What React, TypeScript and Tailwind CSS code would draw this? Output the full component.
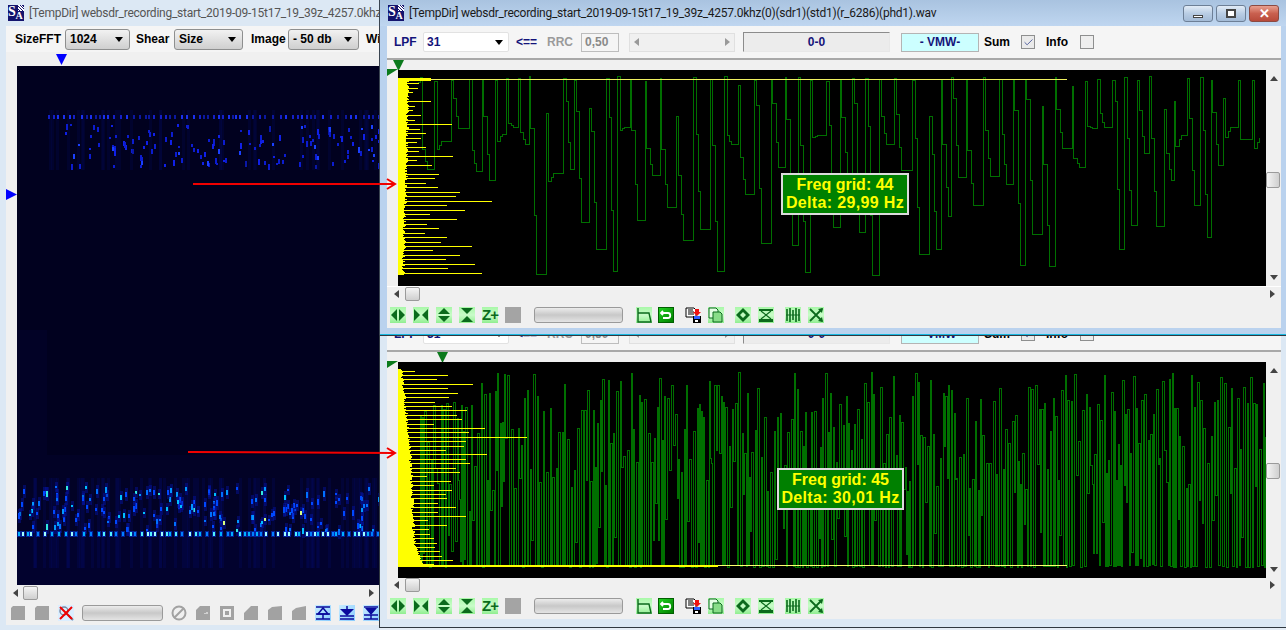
import type { ReactNode } from "react";
import { Check } from "lucide-react";

const TITLE_LEFT = "[TempDir] websdr_recording_start_2019-09-15t17_19_39z_4257.0khz";
const TITLE_RIGHT = `${TITLE_LEFT}(0)(sdr1)(std1)(r_6286)(phd1).wav`;

function rng(seed: number) {
  let s = seed;
  return () => {
    s = (s * 1664525 + 1013904223) % 4294967296;
    return s / 4294967296;
  };
}

// bars read off the reference: [y, x end]
const TOP_BARS = [
  [68, 118], [85, 115], [97, 100], [124, 153], [137, 105], [150, 100], [166, 123], [179, 105], [193, 215], [206, 120],
  [220, 137], [233, 122], [247, 110], [261, 137], [274, 117], [288, 218], [301, 110], [315, 155], [343, 176], [355, 165],
  [370, 138], [382, 173], [397, 239], [409, 227], [424, 335], [436, 200], [451, 254], [463, 150], [478, 230], [491, 140],
  [505, 176], [518, 135], [532, 200], [545, 183], [559, 275], [571, 158], [586, 239], [598, 197], [613, 284], [625, 203], [640, 305],
].map(([y, x]) => [60 + y / 3, 380 + x / 3]);

const LOW_BARS = [
  [49, 90], [61, 189], [73, 155], [88, 264], [100, 189], [115, 219], [127, 192], [140, 150], [154, 201], [166, 246],
  [181, 216], [193, 231], [208, 147], [220, 300], [232, 252], [247, 426], [259, 243], [274, 237], [286, 183], [298, 306],
  [313, 243], [325, 255], [340, 213], [352, 225], [364, 126], [379, 198], [391, 147], [406, 201], [418, 183], [430, 186],
  [445, 159], [457, 213], [472, 159], [484, 243], [496, 129], [511, 186], [523, 132], [538, 135], [550, 147], [565, 156],
  [577, 150], [589, 165], [604, 171], [616, 204], [628, 147],
].map(([y, x]) => [355 + y / 3, 385 + x / 3]);

function bandPath(y0: number, y1: number, edge: (y: number) => number, seed: number) {
  const r = rng(seed);
  let d = "";
  for (let y = y0; y < y1; y++) {
    const w = edge(y) + r() * 3 - 398;
    d += `M398 ${y}h${w.toFixed(0)}v1h-${w.toFixed(0)}z`;
  }
  return d;
}

function topTrace() {
  const r = rng(44);
  let d = "M418 82";
  let x = 420;
  while (x < 1266) {
    const top = r() < 0.7 ? 76 + r() * 5 : 85 + r() * 40;
    const mid = top + 15 + r() * 60;
    const low = 125 + r() * 150;
    const a = Math.round(x);
    d += `H${a}V${top.toFixed(0)}H${a + 1 + Math.round(r() * 2)}V${mid.toFixed(0)}H${a + 5}V${(mid + (low - mid) * 0.6).toFixed(0)}H${a + 7}V${low.toFixed(0)}`;
    x += 10 + r() * 8;
  }
  return d;
}

function lowTrace() {
  const r = rng(45);
  let d = "M420 565";
  let x = 420;
  while (x < 1266) {
    const lim = x < 480 ? 395 : 372;
    const hi = lim + Math.pow(r(), 1.3) * 120;
    const lo = r() < 0.6 ? 565 + r() * 2 : hi + 50 + r() * 100;
    const w = 1 + Math.round(r());
    const w2 = 1 + Math.round(r());
    d += `H${x}V${hi.toFixed(0)}H${x + w}V${Math.min(lo, 567).toFixed(0)}H${x + w + w2}`;
    x += w + w2;
  }
  return d;
}

type Spot = { x: number; y: number; h: number; c: string };

function cloud(seed: number, n: number, x0: number, y0: number, y1: number, colors: string[]): Spot[] {
  const r = rng(seed);
  return Array.from({ length: n }, () => ({
    x: x0 + Math.round(r() * (379 - x0)),
    y: y0 + Math.round(r() * (y1 - y0)),
    h: 2 + Math.round(r() * 4),
    c: colors[Math.floor(r() * r() * colors.length)],
  }));
}

function comb(seed: number, x0: number, y: number, colors: string[]): Spot[] {
  const r = rng(seed);
  const out: Spot[] = [];
  for (let x = x0; x < 380; x += 3 + Math.round(r() * 5)) {
    out.push({ x, y, h: 4, c: colors[Math.floor(r() * colors.length)] });
  }
  return out;
}

const DIM = ["#0c1cd0", "#1020e8", "#1a40ff", "#0a18a8"];
const BRIGHT = ["#0048ff", "#0070ff", "#0098ff", "#00c0ff", "#30e8e0", "#d8ff80"];

const TOP_CLOUD = cloud(11, 140, 47, 124, 165, DIM);
const TOP_COMB = comb(12, 48, 115, ["#1420c8", "#1a30f0", "#0c18a0"]);
const LOW_CLOUD = cloud(21, 170, 18, 486, 530, BRIGHT);
const LOW_COMB = comb(22, 18, 532, ["#00b0ff", "#50f0ff", "#0080ff", "#a0ffff"]);

function Spectrogram() {
  const streaks = rng(31);
  const xs = Array.from({ length: 70 }, () => 18 + Math.round(streaks() * 360));
  return (
    <svg viewBox="17 66 363 519" width={363} height={519} className="block shrink-0" shapeRendering="crispEdges">
      <rect x={17} y={66} width={363} height={519} fill="#01011f" />
      <rect x={17} y={330} width={30} height={255} fill="#020226" />
      <rect x={17} y={455} width={363} height={130} fill="#020226" />
      <rect x={17} y={535} width={363} height={50} fill="#02022e" />
      {xs.slice(0, 40).map((x, i) =>
        x > 47 ? <rect key={i} x={x} y={110} width={3} height={60} fill="#03084a" opacity={0.35} /> : null,
      )}
      {xs.map((x, i) => (
        <rect key={i} x={x} y={478} width={3} height={90} fill="#040a60" opacity={0.3} />
      ))}
      {TOP_CLOUD.map((s, i) => (
        <rect key={i} x={s.x} y={s.y} width={2} height={s.h} fill={s.c} />
      ))}
      {TOP_COMB.map((s, i) => (
        <rect key={i} x={s.x} y={s.y} width={2} height={s.h} fill={s.c} />
      ))}
      {LOW_CLOUD.map((s, i) => (
        <g key={i}>
          <rect x={s.x} y={s.y - 4} width={3} height={s.h + 8} fill="#0414a8" opacity={0.45} />
          <rect x={s.x} y={s.y} width={2} height={s.h} fill={s.c} />
        </g>
      ))}
      {LOW_COMB.map((s, i) => (
        <g key={i}>
          <rect x={s.x - 1} y={s.y - 1} width={4} height={6} fill="#0430d0" opacity={0.6} />
          <rect x={s.x} y={s.y} width={2} height={s.h} fill={s.c} />
        </g>
      ))}
    </svg>
  );
}

function Plot({ low }: { low?: boolean }) {
  const bars = low ? LOW_BARS : TOP_BARS;
  const y0 = low ? 362 : 70;
  const edge = low
    ? (y: number) => (y < 450 ? 400 + (y - 369) * 0.11 : y < 545 ? 409 + (y - 450) * 0.04 : 413 + (y - 545) * 0.45)
    : (y: number) => (y < 90 ? 407 : 407 - (y - 90) * 0.028);
  return (
    <svg viewBox={`398 ${y0} 868 216`} width={868} height={216} className="block shrink-0 bg-black" shapeRendering="crispEdges">
      <path d={low ? lowTrace() : topTrace()} fill="none" stroke="#006f00" strokeWidth={1} />
      <path d={low ? bandPath(369, 566, edge, 3) : bandPath(78, 275, edge, 4)} fill="#ffff00" />
      {bars.map(([y, x], i) => (
        <rect key={i} x={398} y={Math.round(y)} width={x - 398} height={1} fill="#ffff00" />
      ))}
      {low ? (
        <>
          <rect x={398} y={565} width={320} height={2} fill="#ffff00" />
          <rect x={718} y={565} width={349} height={1} fill="#ffff70" />
        </>
      ) : (
        <>
          <rect x={398} y={78} width={33} height={3} fill="#ffff00" />
          <rect x={431} y={79} width={636} height={1} fill="#f0f060" />
        </>
      )}
    </svg>
  );
}

function Arrow({ dir, className = "" }: { dir: "up" | "down" | "left" | "right"; className?: string }) {
  const pts = { up: "0,5 8,5 4,0", down: "0,0 8,0 4,5", left: "5,0 5,8 0,4", right: "0,0 0,8 5,4" }[dir];
  const wide = dir === "up" || dir === "down";
  return (
    <svg width={wide ? 8 : 5} height={wide ? 5 : 8} viewBox={wide ? "0 0 8 5" : "0 0 5 8"} className={`shrink-0 ${className}`}>
      <polygon points={pts} fill="#444" />
    </svg>
  );
}

function Logo() {
  return (
    <span className="relative flex h-4 w-4 shrink-0 items-end overflow-hidden bg-[#14146e] font-['Liberation_Serif',serif] text-[14px] font-bold leading-[14px] text-white">
      <span className="mb-[2px]">S</span>
      <span className="text-[10px] leading-[10px]">A</span>
      <span className="absolute right-0 top-0 h-[6px] w-[6px] bg-[repeating-linear-gradient(45deg,#fff_0,#fff_1px,#14146e_1px,#14146e_2px)]" />
    </span>
  );
}

function WinButton({ kind }: { kind: "min" | "max" | "close" }) {
  const tone =
    kind === "close"
      ? "from-[#e8a090] via-[#c9604f] to-[#b84a3a] border-[#8c4a42]"
      : "from-[#e2ecf7] via-[#b9cde4] to-[#a3bbd7] border-[#6d7f96]";
  return (
    <span className={`flex h-[17px] w-[30px] items-center justify-center rounded-[3px] border bg-gradient-to-b ${tone}`}>
      {kind === "min" && <span className="mt-[6px] h-[3px] w-[10px] border border-[#444] bg-white" />}
      {kind === "max" && <span className="h-[9px] w-[10px] border-2 border-[#444] bg-white" />}
      {kind === "close" && <span className="font-['Liberation_Sans',sans-serif] text-[13px] font-bold leading-none text-white">✕</span>}
    </span>
  );
}

function TitleBar({ text, active }: { text: string; active?: boolean }) {
  return (
    <div
      className={`flex h-[26px] shrink-0 items-center gap-[5px] font-['Roboto',sans-serif] text-[12px] tracking-[-0.25px] whitespace-nowrap ${
        active ? "bg-gradient-to-b from-[#a9c3e0] to-[#bfd6f0] pl-2 pr-[7px] text-[#1a1a1a]" : "bg-[#dce8f4] pl-2 text-[#555]"
      }`}
    >
      <Logo />
      <span className="flex-1 overflow-hidden">{text}</span>
      {active && (
        <span className="mt-px flex gap-[3px]">
          <WinButton kind="min" />
          <WinButton kind="max" />
          <WinButton kind="close" />
        </span>
      )}
    </div>
  );
}

function Combo({ value, className }: { value: string; className: string }) {
  return (
    <span className={`flex h-[21px] shrink-0 items-center justify-between rounded-[3px] border border-[#8e8f8f] bg-gradient-to-b from-[#f2f2f2] to-[#cfcfcf] pl-1 pr-[6px] ${className}`}>
      {value}
      <Arrow dir="down" className="[&_polygon]:fill-black" />
    </span>
  );
}

function LeftToolbar() {
  return (
    <div className="flex h-[26px] shrink-0 items-center overflow-hidden whitespace-nowrap bg-[#f5f5f5] pl-[9px] text-[12px] font-bold text-black">
      <span className="w-[50px] shrink-0">SizeFFT</span>
      <Combo value="1024" className="w-[65px]" />
      <span className="ml-[6px] w-[38px] shrink-0">Shear</span>
      <Combo value="Size" className="w-[69px]" />
      <span className="ml-2 w-[37px] shrink-0">Image</span>
      <Combo value="- 50 db" className="w-[71px]" />
      <span className="ml-[7px] shrink-0">Width</span>
    </div>
  );
}

function RightToolbar() {
  return (
    <div className="flex h-[32px] shrink-0 items-center whitespace-nowrap bg-[#f5f5f5] pl-[7px] text-[12px] font-bold text-black">
      <span className="w-[29px] text-[#14147a]">LPF</span>
      <span className="flex h-[20px] w-[86px] items-center justify-between rounded-[2px] border border-[#e2e2e2] bg-white pl-[3px] pr-[5px] text-[#14147a]">
        31
        <Arrow dir="down" className="[&_polygon]:fill-black" />
      </span>
      <span className="ml-[7px] w-[31px] text-[#14147a]">&lt;==</span>
      <span className="w-[34px] text-[#9a9a9a]">RRC</span>
      <span className="flex h-[19px] w-[38px] items-center border border-[#bdbdbd] bg-[#f5f5f5] pl-[3px] text-[#8a8a8a]">0,50</span>
      <span className="ml-[10px] flex h-[19px] w-[106px] items-center justify-between border border-[#e0e0e0] bg-[#f0f0f0] px-1">
        <Arrow dir="left" className="[&_polygon]:fill-[#999]" />
        <Arrow dir="right" className="[&_polygon]:fill-[#999]" />
      </span>
      <span className="ml-2 flex h-[20px] w-[147px] items-center justify-center border border-t-[#8c8c8c] border-l-[#8c8c8c] border-b-[#e8e8e8] border-r-[#e8e8e8] bg-[#ececec] text-[#14147a]">0-0</span>
      <span className="ml-[11px] flex h-[19px] w-[78px] items-center justify-center border border-[#b4b4b4] bg-[#ccffff] text-[#14147a]">- VMW-</span>
      <span className="ml-[5px] w-[37px]">Sum</span>
      <span className="flex h-[14px] w-[14px] items-center justify-center border border-[#8e8f8f] bg-[#eaeaea]">
        <Check size={11} strokeWidth={2} color="#4a5a9a" />
      </span>
      <span className="ml-[11px] w-[34px]">Info</span>
      <span className="h-[14px] w-[14px] border border-[#8e8f8f] bg-[#eeeeee]" />
    </div>
  );
}

function ScrollH({ thumb, className = "" }: { thumb: string; className?: string }) {
  return (
    <div className={`flex h-[14px] shrink-0 items-center bg-[#f0f0f0] ${className}`}>
      <Arrow dir="left" className="ml-[7px]" />
      <span className={`h-[14px] w-[15px] rounded-[2px] border border-[#9a9a9a] bg-gradient-to-b from-[#f4f4f4] to-[#cfcfcf] ${thumb}`} />
      <Arrow dir="right" className="ml-auto mr-[6px]" />
    </div>
  );
}

function ScrollV({ thumb }: { thumb: string }) {
  return (
    <div className="relative flex w-[15px] shrink-0 flex-col items-center justify-between bg-[#f0f0f0] py-[6px]">
      <Arrow dir="up" />
      <span className={`absolute left-0 h-[16px] w-[14px] rounded-[2px] border border-[#9a9a9a] bg-gradient-to-r from-[#f4f4f4] to-[#cfcfcf] ${thumb}`} />
      <Arrow dir="down" />
    </div>
  );
}

function Slider({ w }: { w: string }) {
  return <span className={`h-[16px] ${w} rounded-[3px] border border-[#9a9a9a] bg-gradient-to-b from-[#ececec] via-[#c8c8c8] to-[#e4e4e4]`} />;
}

function Tile({ children, tone = "bg-gradient-to-b from-[#a8f8a8] via-[#c8fcc8] to-[#90ee90]", className = "" }: { children: ReactNode; tone?: string; className?: string }) {
  return <span className={`flex h-4 w-4 shrink-0 items-center justify-center ${tone} ${className}`}>{children}</span>;
}

function Draw({ children }: { children: ReactNode }) {
  return (
    <svg viewBox="0 0 16 16" width={16} height={16} className="block shrink-0">
      {children}
    </svg>
  );
}

const G = "#0b6a1c";
const B = "#0a0a9c";
const GR = "#a2a2a2";

function GreenToolbar() {
  return (
    <div className="flex h-[27px] shrink-0 items-center bg-[#f0f0f0] pl-[3px]">
      <span className="flex gap-[7px]">
        <Tile><Draw><polygon points="1,8 7,2 7,14" fill={G} /><polygon points="15,8 9,2 9,14" fill={G} /></Draw></Tile>
        <Tile><Draw><polygon points="1,2 7,8 1,14" fill={G} /><polygon points="15,2 9,8 15,14" fill={G} /></Draw></Tile>
        <Tile><Draw><polygon points="8,1 14,7 2,7" fill={G} /><polygon points="8,15 14,9 2,9" fill={G} /></Draw></Tile>
        <Tile><Draw><polygon points="2,1 14,1 8,7" fill={G} /><polygon points="2,15 14,15 8,9" fill={G} /></Draw></Tile>
        <Tile><span className="font-['Liberation_Sans',sans-serif] text-[15px] font-bold leading-none tracking-[-1px] text-[#0b6a1c]">Z+</span></Tile>
        <span className="h-4 w-4 bg-[#a4a4a4]" />
      </span>
      <span className="ml-[13px] flex"><Slider w="w-[89px]" /></span>
      <span className="ml-[13px] flex gap-[6px]">
        <Tile><Draw><path d="M2 1V15H15L13 6H2" fill="none" stroke={G} strokeWidth={1.4} /></Draw></Tile>
        <Tile tone="bg-gradient-to-br from-[#20d020] to-[#008000] border border-[#006000]">
          <Draw><path d="M5 4L3 6L5 8M3 6H10C13 6 13 11 10 11H5" fill="none" stroke="#fff" strokeWidth={1.8} /></Draw>
        </Tile>
      </span>
      <span className="ml-[11px] flex gap-[7px]">
        <Draw>
          <path d="M1 1H9L11 3V10H1Z" fill="#fff" stroke="#000" />
          <path d="M3 3H8M3 5H9M3 7H9" stroke="#000" />
          <path d="M10 2H14V5H16L12 9L8 5H10Z" fill="#ee1111" />
          <rect x={8} y={9} width={8} height={7} fill="#000" />
          <rect x={9} y={9} width={6} height={3} fill="#3060ff" />
          <rect x={10} y={13} width={3} height={2} fill="#fff" />
        </Draw>
        <Tile>
          <Draw>
            <path d="M1 1H8L10 3V11H1Z" fill="#e4ffe4" stroke={G} />
            <path d="M5 5H12L14 7V15H5Z" fill="#88dd88" stroke={G} />
          </Draw>
        </Tile>
      </span>
      <span className="ml-[11px] flex gap-[7px]">
        <Tile><Draw><polygon points="8,1 15,8 8,15 1,8" fill={G} /><polygon points="8,5 11,8 8,11 5,8" fill="#c0fac0" /></Draw></Tile>
        <Tile><Draw><path d="M1 2H15V4H1ZM1 12H15V15H1Z" fill={G} /><path d="M3 4L13 12M13 4L3 12" stroke={G} strokeWidth={1.2} /></Draw></Tile>
      </span>
      <span className="ml-[11px] flex gap-[7px]">
        <Tile><Draw><path d="M2 2V14M5 1V15M8 3V13M11 1V15M14 2V14" stroke={G} strokeWidth={1.6} /><path d="M1 8H15" stroke={G} /></Draw></Tile>
        <Tile><Draw><path d="M2 2L14 14M14 2L2 14" stroke={G} strokeWidth={1.8} /><polygon points="15,1 10,2 14,6" fill={G} /><polygon points="15,15 10,14 14,10" fill={G} /></Draw></Tile>
      </span>
    </div>
  );
}

const CUT = "M3 1H15V15H1V3Z";
const SLOPE = "M8 1H15V15H1V8Z";

function BlueTile({ children }: { children: ReactNode }) {
  return <Tile tone="bg-gradient-to-br from-[#c8ecff] to-[#88ccff]">{children}</Tile>;
}

function LeftIcons() {
  return (
    <div className="flex h-[25px] shrink-0 items-center gap-2 overflow-hidden bg-[#f0f0f0] pl-1">
      <Draw><path d={CUT} fill={GR} /></Draw>
      <Draw><path d={CUT} fill={GR} /></Draw>
      <Tile tone="bg-[#dbeeff]">
        <Draw>
          <circle cx={6} cy={6} r={4} fill="none" stroke="#7a8aa0" strokeWidth={1.5} />
          <path d="M10 10L15 15" stroke="#7a8aa0" strokeWidth={2} />
          <path d="M2 2L14 14M14 2L2 14" stroke="#ee0000" strokeWidth={2} />
        </Draw>
      </Tile>
      <Slider w="w-[81px] shrink-0" />
      <Draw><circle cx={8} cy={8} r={6.5} fill="none" stroke={GR} strokeWidth={2} /><path d="M3 13L13 3" stroke={GR} strokeWidth={2} /></Draw>
      <Draw><path d="M5 1H15V15H1V5Z" fill={GR} /><path d="M12 7V9M10 8V9" stroke="#fff" /></Draw>
      <Draw><path d="M1 1H15V15H1ZM4 4V12H12V4Z" fill={GR} fillRule="evenodd" /><rect x={6} y={6} width={4} height={4} fill={GR} /></Draw>
      <Draw><path d={SLOPE} fill={GR} /></Draw>
      <Draw><path d="M5 2L15 1V15H1V5Z" fill={GR} /></Draw>
      <Draw><path d="M5 3L15 1V15H1V6Z" fill={GR} /></Draw>
      <BlueTile><Draw><path d="M1 2H15M1 14H15M1 9H15" stroke={B} strokeWidth={1.5} /><path d="M8 3L3 9H13ZM8 9V14" fill="none" stroke={B} strokeWidth={1.5} /></Draw></BlueTile>
      <BlueTile><Draw><path d="M8 1V4M1 14H15" stroke={B} strokeWidth={1.5} /><polygon points="1,4 15,4 8,11" fill={B} /><path d="M1 11H15" stroke={B} strokeWidth={1.5} /></Draw></BlueTile>
      <BlueTile><Draw><path d="M1 2H15M1 14H15M1 10H15" stroke={B} strokeWidth={1.5} /><polygon points="2,3 14,3 8,10" fill={B} /><path d="M8 10V14" stroke={B} strokeWidth={1.5} /></Draw></BlueTile>
    </div>
  );
}

function Marker({ color, className }: { color: string; className: string }) {
  return (
    <svg width={11} height={11} viewBox="0 0 11 11" className={className}>
      <polygon points="0,0 11,0 5.5,11" fill={color} />
    </svg>
  );
}

function FreqLabel({ grid, delta, className }: { grid: string; delta: string; className: string }) {
  return (
    <div className={`absolute flex flex-col items-center justify-center border-2 border-[#dcdcdc] bg-[#008000] font-['Liberation_Sans',sans-serif] text-[16px] font-bold leading-[18px] text-[#ffff00] ${className}`}>
      <span>Freq grid: {grid}</span>
      <span className="tracking-[0.35px]">Delta: {delta}</span>
    </div>
  );
}

function PlotRow({ low, children }: { low?: boolean; children: ReactNode }) {
  return (
    <div className="relative flex h-[216px] shrink-0 bg-[#f0f0f0] pl-[11px]">
      <Plot low={low} />
      {children}
    </div>
  );
}

function CornerMark() {
  return (
    <svg width={11} height={7} viewBox="0 0 11 7" className="absolute left-0 -top-px">
      <polygon points="0,0 11,0 0,7" fill="#0b7a1c" />
    </svg>
  );
}

export default function App() {
  return (
    <div className="relative h-[630px] w-[1286px] overflow-hidden bg-[#e6edf5] font-['Liberation_Sans',sans-serif]">
      {/* spectrogram window, behind the other two */}
      <div className="absolute left-0 top-0 flex h-[630px] w-[380px] flex-col bg-[#dce8f4]">
        <TitleBar text={TITLE_LEFT} />
        <div className="ml-[6px] flex flex-col">
          <LeftToolbar />
          <div className="flex h-[14px] shrink-0 items-end bg-[#f0f0f0] pb-px">
            <svg width={11} height={11} viewBox="0 0 11 11" className="ml-[50px]">
              <polygon points="0,0 11,0 5.5,11" fill="#0000ff" />
            </svg>
          </div>
          <div className="relative flex h-[519px] shrink-0 bg-[#f0f0f0] pl-[11px]">
            <Spectrogram />
            <svg width={11} height={11} viewBox="0 0 11 11" className="absolute left-0 top-[123px]">
              <polygon points="0,0 11,5.5 0,11" fill="#0000ff" />
            </svg>
          </div>
          <ScrollH thumb="ml-[5px]" className="h-[15px]" />
          <LeftIcons />
        </div>
      </div>

      {/* top Sum window */}
      <div className="absolute left-[379px] top-0 flex h-[335px] w-[907px] flex-col overflow-hidden border-l border-[#3a4450] bg-[#bad2ee]">
        <TitleBar text={TITLE_RIGHT} active />
        <div className="mx-[7px] mr-[5px] flex flex-col">
          <RightToolbar />
          <div className="h-[2px] bg-[#a8a8a8]" />
          <div className="relative h-[10px] shrink-0 bg-[#f0f0f0]">
            <Marker color="#0b7a1c" className="absolute left-[6px] top-0" />
          </div>
          <PlotRow>
            <CornerMark />
            <ScrollV thumb="top-[102px]" />
            <FreqLabel grid="44" delta="29,99 Hz" className="left-[394px] top-[103px] h-[42px] w-[128px]" />
          </PlotRow>
          <div className="h-px bg-white" />
          <ScrollH thumb="ml-[6px]" />
          <GreenToolbar />
        </div>
        <div className="mt-auto h-px bg-[#18b8e0]" />
      </div>

      {/* lower Sum window, its toolbar partly covered */}
      <div className="absolute left-[379px] top-[335px] flex h-[293px] w-[907px] flex-col overflow-hidden border-b border-l border-t border-[#303840] bg-[#dce8f4]">
        <div className="mx-[7px] mr-[5px] flex flex-col">
          <div className="-mt-[18px]">
            <RightToolbar />
          </div>
          <div className="h-[2px] bg-[#a8a8a8]" />
          <div className="relative h-[10px] shrink-0 bg-[#f0f0f0]">
            <Marker color="#0b7a1c" className="absolute left-[50px] top-0" />
          </div>
          <PlotRow low>
            <CornerMark />
            <ScrollV thumb="top-[101px]" />
            <FreqLabel grid="45" delta="30,01 Hz" className="left-[390px] top-[106px] h-[42px] w-[127px]" />
          </PlotRow>
          <ScrollH thumb="ml-[6px]" />
          <GreenToolbar />
        </div>
      </div>

      {/* red arrows drawn across the windows */}
      <svg width={1286} height={630} viewBox="0 0 1286 630" className="pointer-events-none absolute left-0 top-0">
        <path d="M193 184H395M387 179L395 184L387 189" fill="none" stroke="#f00000" strokeWidth={2} />
        <path d="M188 452L395 453M387 448L395 453L387 458" fill="none" stroke="#f00000" strokeWidth={2} />
      </svg>
    </div>
  );
}
